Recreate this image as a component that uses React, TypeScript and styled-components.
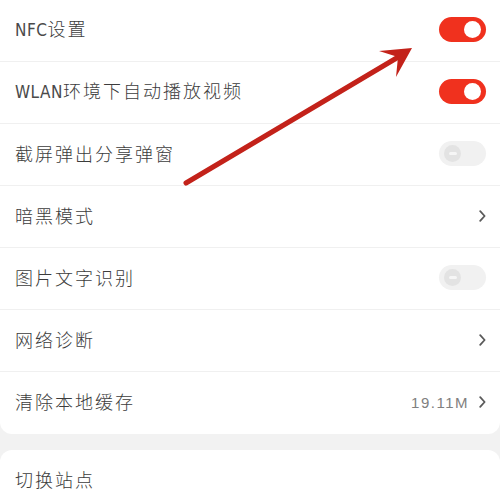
import React from "react";
import styled, { createGlobalStyle } from "styled-components";

const Global = createGlobalStyle`
  html, body { margin: 0; padding: 0; background: #f2f2f2; }
  body { font-family: "Noto Sans CJK SC", "Noto Sans", sans-serif; }
`;

const Page = styled.div`
  position: relative;
  width: 500px;
  height: 496px;
  overflow: hidden;
  background: #f2f2f2;
  display: flex;
  flex-direction: column;
  gap: 16px;
`;

const Card = styled.div<{ $top?: boolean }>`
  background: #ffffff;
  border-radius: ${(p) => (p.$top ? "0 0 12px 12px" : "12px 12px 0 0")};
  display: flex;
  flex-direction: column;
`;

const Row = styled.div<{ $last?: boolean }>`
  height: 62px;
  flex-shrink: 0;
  box-sizing: border-box;
  display: flex;
  align-items: center;
  padding: 0 14px 2px 15px;
  border-bottom: ${(p) => (p.$last ? "none" : "1px solid #f0f0f0")};
`;

const Label = styled.div`
  flex: 1;
  font-size: 18px;
  line-height: 22px;
  padding-bottom: 2px;
  letter-spacing: 2px;
  color: #3c3c3c;
  font-weight: 300;
  white-space: nowrap;
`;

const Latin = styled.span`
  font-family: "Liberation Sans Narrow", "DejaVu Sans Condensed", "Liberation Sans", sans-serif;
  font-size: 17px;
  letter-spacing: 0.5px;
  font-weight: 400;
  color: #4a4a4a;
  font-stretch: condensed;
`;

const Value = styled.span`
  font-family: "Liberation Sans Narrow", "Liberation Sans", sans-serif;
  font-size: 15px;
  letter-spacing: 1.5px;
  color: #808080;
  margin-right: 9px;
`;

const Toggle = styled.div<{ $on: boolean }>`
  width: 47px;
  height: 25px;
  border-radius: 13px;
  background: ${(p) => (p.$on ? "#f0311e" : "#f1f1f1")};
  display: flex;
  align-items: center;
  justify-content: ${(p) => (p.$on ? "flex-end" : "flex-start")};
  padding: 0 5px;
  box-sizing: border-box;
`;

const Knob = styled.div<{ $on: boolean }>`
  width: 17px;
  height: 17px;
  border-radius: 50%;
  background: ${(p) => (p.$on ? "#ffffff" : "#e3e3e3")};
  display: flex;
  align-items: center;
  justify-content: center;
  &::after {
    content: "";
    display: ${(p) => (p.$on ? "none" : "block")};
    width: 8px;
    height: 3px;
    border-radius: 2px;
    background: #f6f6f6;
  }
`;

const ChevronWrap = styled.div`
  width: 8px;
  display: flex;
  justify-content: center;
`;

const Chevron = () => (
  <ChevronWrap>
    <svg width="7" height="12" viewBox="0 0 7 12">
      <path d="M1.2 1.2 L5.6 6 L1.2 10.8" fill="none" stroke="#5a5a5a" strokeWidth="1.8" strokeLinecap="round" strokeLinejoin="round" />
    </svg>
  </ChevronWrap>
);

const Overlay = styled.svg`
  position: absolute;
  left: 0;
  top: 0;
  pointer-events: none;
`;

type Item = { label: React.ReactNode; kind: "on" | "off" | "chev"; value?: string };

const items: Item[] = [
  { label: <><Latin>NFC</Latin>设置</>, kind: "on" },
  { label: <><Latin>WLAN</Latin>环境下自动播放视频</>, kind: "on" },
  { label: "截屏弹出分享弹窗", kind: "off" },
  { label: "暗黑模式", kind: "chev" },
  { label: "图片文字识别", kind: "off" },
  { label: "网络诊断", kind: "chev" },
  { label: "清除本地缓存", kind: "chev", value: "19.11M" },
];

export default function App() {
  return (
    <>
      <Global />
      <Page>
        <Card $top>
          {items.map((it, i) => (
            <Row key={i} $last={i === items.length - 1}>
              <Label>{it.label}</Label>
              {it.value && <Value>{it.value}</Value>}
              {it.kind === "chev" ? (
                <Chevron />
              ) : (
                <Toggle $on={it.kind === "on"}>
                  <Knob $on={it.kind === "on"} />
                </Toggle>
              )}
            </Row>
          ))}
        </Card>
        <Card>
          <Row $last>
            <Label>切换站点</Label>
          </Row>
        </Card>
        <Overlay width="500" height="496" viewBox="0 0 500 496">
          <line x1="186" y1="183" x2="400" y2="56" stroke="#c3221a" strokeWidth="5" strokeLinecap="round" />
          <polygon points="412,48 379,51 398,57 396,77" fill="#c3221a" />
        </Overlay>
      </Page>
    </>
  );
}
